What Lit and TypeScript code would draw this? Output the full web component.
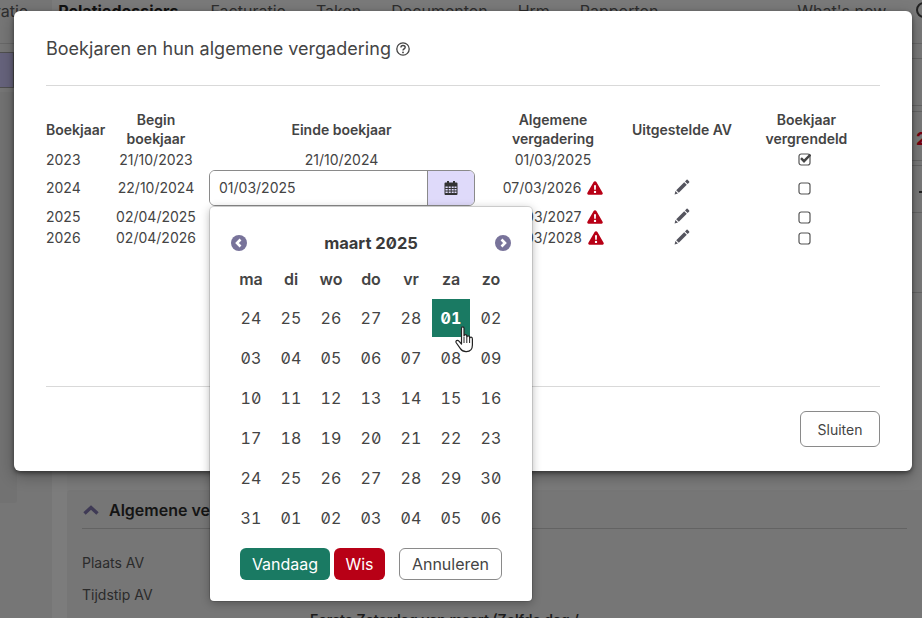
import { LitElement, html, css, svg } from "lit";
import { customElement } from "lit/decorators.js";

const pencil = html`<svg class="pencil" viewBox="0 0 16 16"><path d="M0.6 15.4 L1.4 12 L4 14.6 Z M2.2 11.2 L10.2 3.2 L12.8 5.8 L4.8 13.8 Z M11 2.4 L12.6 0.8 Q13.1 0.4 13.6 0.8 L15.2 2.4 Q15.6 2.9 15.2 3.4 L13.6 5 Z" fill="#55555f"/></svg>`;
const warn = html`<svg class="warn" viewBox="0 0 16 14"><path fill-rule="evenodd" d="M8 0.3 Q8.9 0.3 9.4 1.1 L15.6 11.8 Q16.3 13.4 14.6 13.7 L1.4 13.7 Q-0.3 13.4 0.4 11.8 L6.6 1.1 Q7.1 0.3 8 0.3 Z M7 4.3 L7.2 8.8 L8.8 8.8 L9 4.3 Z M8 9.7 A1.2 1.2 0 1 0 8 12.1 A1.2 1.2 0 1 0 8 9.7 Z" fill="#b80016"/></svg>`;
const box = (checked = false) => html`<svg class="box" viewBox="0 0 13 13"><rect x="1" y="1" width="11" height="11" rx="2.2" fill="none" stroke="#555" stroke-width="1.2"/>${checked ? svg`<path d="M3 5.2 L6 8.2 L12.5 1.5" fill="none" stroke="#444" stroke-width="2.4"/>` : ""}</svg>`;
const arrow = (dir: "l" | "r") => html`<svg class="arrow" viewBox="0 0 16 16"><circle cx="8" cy="8" r="8" fill="#78739a"/><path d="${dir === "l" ? "M9.5 4.5 L6 8 L9.5 11.5" : "M6.5 4.5 L10 8 L6.5 11.5"}" fill="none" stroke="#fff" stroke-width="2.6"/></svg>`;
const calIcon = html`<svg viewBox="0 0 14 14"><path fill-rule="evenodd" fill="#333" d="M3 0h2v1.5h4V0h2v1.5h1.5q1 0 1 1V13q0 1-1 1h-11q-1 0-1-1V2.5q0-1 1-1H3z M1.5 5.5v1.5h2.2V5.5z M4.7 5.5v1.5h2V5.5z M7.7 5.5v1.5h2V5.5z M10.5 5.5v1.5h2V5.5z M1.5 8v1.5h2.2V8z M4.7 8v1.5h2V8z M7.7 8v1.5h2V8z M10.5 8v1.5h2V8z M1.5 10.5V12h2.2v-1.5z M4.7 10.5V12h2v-1.5z M7.7 10.5V12h2v-1.5z M10.5 10.5V12h2v-1.5z"/></svg>`;
const helpIcon = html`<svg viewBox="0 0 14 14"><circle cx="7" cy="7" r="6.2" fill="none" stroke="#444" stroke-width="1.3"/><path d="M4.9 5.5 Q5 3.5 7 3.5 Q9.2 3.5 9.2 5.3 Q9.2 6.4 8 7 Q7 7.5 7 8.5" fill="none" stroke="#444" stroke-width="1.4"/><circle cx="7" cy="10.4" r=".9" fill="#444"/></svg>`;
const hand = html`<svg class="hand" viewBox="0 0 20 27"><path d="M6.5 2.2 Q6.5 .8 7.8 .8 Q9 .8 9 2.2 L9 10 Q9.2 8.6 10.5 8.6 Q11.8 8.6 11.8 10.2 L11.8 11.2 Q12 9.8 13.3 9.8 Q14.6 9.8 14.6 11.4 L14.6 12.4 Q14.9 11 16.1 11.2 Q17.4 11.4 17.4 13 L17.4 19 Q17.4 25.4 11.4 25.6 Q7.4 25.8 5.4 22.6 L1.4 17 Q0.4 15.4 1.6 14.6 Q2.8 13.9 4 15.2 L6.5 18 Z" fill="#fff" stroke="#222" stroke-width="1.2" stroke-linejoin="round"/><path d="M9 11v6M11.8 11.5v5.5M14.6 12.5v4.5" stroke="#222" stroke-width="1"/></svg>`;

const weeks = [
  ["24","25","26","27","28","01","02"],
  ["03","04","05","06","07","08","09"],
  ["10","11","12","13","14","15","16"],
  ["17","18","19","20","21","22","23"],
  ["24","25","26","27","28","29","30"],
  ["31","01","02","03","04","05","06"],
];

@customElement("app-root")
export class AppRoot extends LitElement {
  static styles = css`
    :host { display: block; width: 922px; height: 618px; position: relative; overflow: hidden; font-family: Inter, "Liberation Sans", sans-serif; font-size: 14px; color: #444; background: linear-gradient(to right, #767676 52px, #7c7c7c 52px, #7c7c7c 67px, #7a7a7a 67px); }
    * { box-sizing: border-box; }

    /* page behind the dialog */
    .page { height: 618px; overflow: hidden; display: flex; flex-direction: column; color: #222; }
    .nav { flex: none; height: 44px; border-bottom: 1px solid #686868; display: flex; gap: 30px; font-size: 16px; line-height: 22px; color: #2e2e2e; white-space: nowrap; }
    .nav .first { margin-left: -71px; }
    .nav b { color: #111; font-weight: 700; margin-right: 2px; }
    .nav .wn { margin-left: 109px; }
    .nav .ic { flex: none; width: 16px; height: 16px; border: 2px solid #222; border-radius: 50%; margin-top: 2px; }
    .strip { flex: none; height: 446px; position: relative; }
    .tab { position: relative; width: 14px; height: 36px; margin-top: 8px; background: #66637c; border: 1px solid #4f4f4f; border-left: 0; }
    .leftpanel { position: absolute; left: 0; top: 48px; width: 17px; height: 411px; background: #727272; border-radius: 0 0 3px 0; }
    .rline { position: absolute; left: 912px; right: 0; height: 1px; background: #666; }
    .l1 { top: 14px; } .l2 { top: 61px; } .l3 { top: 67px; } .l4 { top: 116px; } .l5 { top: 121px; } .l6 { top: 168px; } .l7 { top: 248px; }
    .red { position: absolute; left: 916px; top: 84px; color: #7a0010; font-weight: 700; font-size: 18px; line-height: 22px; }
    .dash { position: absolute; left: 919px; top: 147px; width: 3px; height: 2px; background: #222; }
    .sec { flex: 1; margin-left: 67px; background: #767676; border-radius: 4px 0 0 0; padding: 0 15px; position: relative; }
    .sec-h { display: flex; align-items: center; gap: 10px; height: 39px; padding-top: 2px; border-bottom: 1px solid #636363; font-weight: 600; font-size: 16px; color: #141414; white-space: nowrap; overflow: hidden; }
    .sec-h svg { width: 16px; height: 10px; flex: none; margin-left: 1px; }
    .sec-row { height: 32px; display: flex; align-items: center; color: #2b2b2b; font-size: 14px; }
    .sec-first { margin-top: 17px; }
    .note { position: absolute; left: 243px; top: 121px; font-weight: 600; font-size: 14px; line-height: 18px; color: #1c1c1c; white-space: nowrap; }

    /* dialog */
    .modal { position: absolute; left: 14px; top: 11px; width: 898px; height: 460px; background: #fff; border-radius: 6px; padding: 0 32px; box-shadow: 0 2px 4px rgba(0,0,0,.45), 0 5px 15px rgba(0,0,0,.3); display: flex; flex-direction: column; }
    .head { height: 75px; border-bottom: 1px solid #d9d9d9; display: flex; align-items: center; gap: 5px; font-size: 18px; letter-spacing: .02px; color: #444; flex: none; }
    .head svg { width: 14px; height: 14px; margin-top: 2px; }
    .tbl { display: grid; grid-template-columns: 59px 102px 269px 154px 104px 145px; grid-template-rows: 38px 21px 36px 22px 20px; margin-top: 25px; flex: none; line-height: 19px; }
    .tbl > div { display: flex; align-items: center; justify-content: center; text-align: center; white-space: nowrap; }
    .tbl > .th { font-weight: 600; font-size: 14px; color: #444; padding-bottom: 2px; }
    .tbl > .l { justify-content: flex-start; }
    .tbl > .up { padding-bottom: 1px; }
    .gap5 { gap: 6px; }
    .warn { width: 16px; height: 14px; flex: none; }
    .pencil { width: 16px; height: 16px; margin-top: -2px; }
    .box { width: 13px; height: 13px; margin-left: -5px; }
    .input { display: flex; width: 266px; height: 36px; margin-left: 1px; border: 1px solid #8a8a8a; border-radius: 6px; overflow: hidden; }
    .input .val { flex: 1; display: flex; align-items: center; padding: 0 0 1px 9px; font-size: 14px; background: #fff; border-right: 1px solid #8a8a8a; }
    .input .btn { width: 46px; flex: none; background: #dfdafa; display: flex; align-items: center; justify-content: center; }
    .input svg { width: 14px; height: 14px; }
    .spacer { flex: 1; }
    .foot { height: 85px; border-top: 1px solid #d9d9d9; display: flex; justify-content: flex-end; padding-top: 24px; flex: none; }
    .close { width: 80px; height: 36px; border: 1px solid #8a8a8a; border-radius: 6px; display: flex; align-items: center; justify-content: center; font-size: 14px; color: #444; }

    /* calendar */
    .cal { position: absolute; left: 210px; top: 207px; width: 322px; height: 394px; background: #fff; border-radius: 4px; box-shadow: 0 0 0 1px rgba(0,0,0,.12), 0 2px 10px rgba(0,0,0,.3); padding: 26px 21px 0; }
    .cal-h { display: flex; align-items: center; justify-content: space-between; height: 22px; margin-top: -1px; font-weight: 700; font-size: 16.5px; color: #3a3a3a; font-variant-numeric: slashed-zero; }
    .arrow { width: 16px; height: 16px; }
    .grid { display: grid; grid-template-columns: repeat(7, 40px); grid-auto-rows: 40px; margin-top: 4px; }
    .wd { height: 32px; margin-top: 5px; align-self: start; display: flex; align-items: center; justify-content: center; font-weight: 600; font-size: 16px; color: #444; }
    .d { display: flex; align-items: center; justify-content: center; font-size: 16px; color: #444; letter-spacing: .2px; font-variant-numeric: slashed-zero tabular-nums; }
    .sel { width: 38px; height: 38px; background: #1a7a63; color: #fff; font-weight: 700; justify-self: center; align-self: center; }
    .acts { display: flex; margin: 10px 0 0 9px; height: 32px; font-size: 16px; }
    .acts div { display: flex; align-items: center; justify-content: center; border-radius: 6px; }
    .today { width: 90px; background: #1a7a63; color: #fff; }
    .wis { width: 51px; background: #b80016; color: #fff; margin-left: 4px; }
    .cancel { width: 103px; border: 1px solid #8a8a8a; color: #444; margin-left: 14px; }
    .hand { position: absolute; left: 455px; top: 326px; width: 20px; height: 27px; }
  `;

  render() {
    return html`
      <div class="page">
        <div class="nav">
          <span class="first">Administratie</span>
          <b>Relatiedossiers</b>
          <span>Facturatie</span>
          <span>Taken</span>
          <span>Documenten</span>
          <span>Hrm</span>
          <span>Rapporten</span>
          <span class="wn">What's now</span>
          <span class="ic"></span>
        </div>
        <div class="strip">
          <div class="leftpanel"></div>
          <div class="tab"></div>
          <div class="rline l1"></div><div class="rline l2"></div><div class="rline l3"></div>
          <div class="rline l4"></div><div class="rline l5"></div><div class="rline l6"></div><div class="rline l7"></div>
          <div class="red">2</div>
          <div class="dash"></div>
        </div>
        <div class="sec">
          <div class="sec-h"><svg viewBox="0 0 16 10"><path d="M1.5 8.5 L8 2.5 L14.5 8.5" fill="none" stroke="#3f3a55" stroke-width="3.4"/></svg>Algemene ver</div>
          <div class="sec-row sec-first">Plaats AV</div>
          <div class="sec-row">Tijdstip AV</div>
          <div class="note">Eerste Zaterdag van maart (Zelfde dag /</div>
        </div>
      </div>

      <div class="modal">
        <div class="head">Boekjaren en hun algemene vergadering ${helpIcon}</div>
        <div class="tbl">
          <div class="th l">Boekjaar</div><div class="th">Begin<br />boekjaar</div><div class="th">Einde boekjaar</div><div class="th">Algemene<br />vergadering</div><div class="th">Uitgestelde AV</div><div class="th">Boekjaar<br />vergrendeld</div>

          <div class="l">2023</div><div>21/10/2023</div><div>21/10/2024</div><div>01/03/2025</div><div></div><div>${box(true)}</div>

          <div class="l up">2024</div><div class="up">22/10/2024</div>
          <div><div class="input"><div class="val">01/03/2025</div><div class="btn">${calIcon}</div></div></div>
          <div class="gap5 up">07/03/2026 ${warn}</div><div>${pencil}</div><div>${box()}</div>

          <div class="l up">2025</div><div class="up">02/04/2025</div><div></div><div class="gap5 up">06/03/2027 ${warn}</div><div>${pencil}</div><div>${box()}</div>
          <div class="l up">2026</div><div class="up">02/04/2026</div><div></div><div class="gap5 up">04/03/2028 ${warn}</div><div>${pencil}</div><div>${box()}</div>
        </div>
        <div class="spacer"></div>
        <div class="foot"><div class="close">Sluiten</div></div>
      </div>

      <div class="cal">
        <div class="cal-h">${arrow("l")}<span>maart 2025</span>${arrow("r")}</div>
        <div class="grid">
          ${["ma","di","wo","do","vr","za","zo"].map((w) => html`<div class="wd">${w}</div>`)}
          ${weeks.flatMap((row, r) => row.map((d, c) => html`<div class="d ${r === 0 && c === 5 ? "sel" : ""}">${d}</div>`))}
        </div>
        <div class="acts">
          <div class="today">Vandaag</div>
          <div class="wis">Wis</div>
          <div class="cancel">Annuleren</div>
        </div>
      </div>
      ${hand}
    `;
  }
}
